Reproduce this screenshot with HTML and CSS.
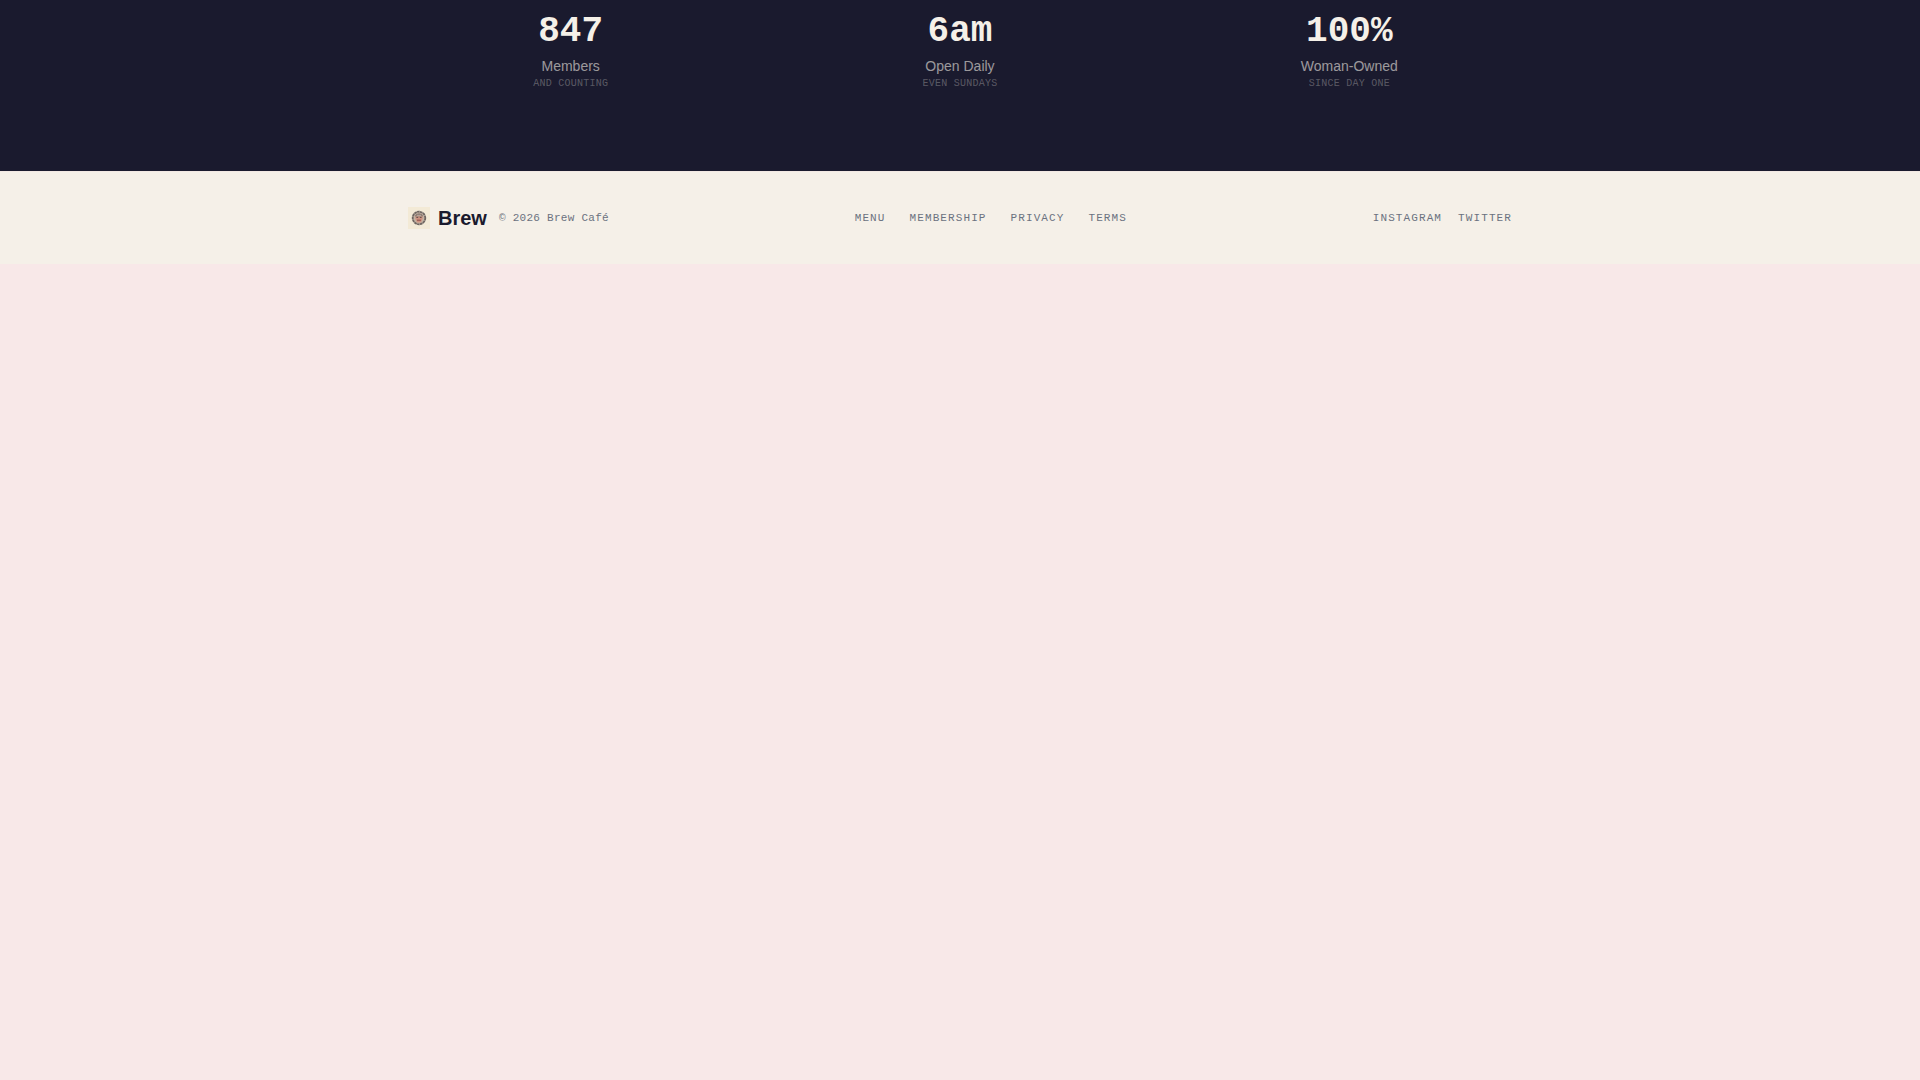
FILE: index.html
```html
<!DOCTYPE html>
<html lang="en">
<head>
    <meta charset="UTF-8">
    <meta name="viewport" content="width=device-width, initial-scale=1">
    <title>Brew Café</title>
    <link rel="stylesheet" href="styles.css">
</head>
<body>
    <section class="stats">
        <div class="container stats-grid">
            <div class="stat">
                <div class="stat-value">847</div>
                <div class="stat-label">Members</div>
                <div class="stat-note">AND COUNTING</div>
            </div>
            <div class="stat">
                <div class="stat-value">6am</div>
                <div class="stat-label">Open Daily</div>
                <div class="stat-note">EVEN SUNDAYS</div>
            </div>
            <div class="stat">
                <div class="stat-value">100%</div>
                <div class="stat-label">Woman-Owned</div>
                <div class="stat-note">SINCE DAY ONE</div>
            </div>
        </div>
    </section>

    <footer class="footer">
        <div class="container footer-row">
            <div class="brand">
                <svg class="logo" viewBox="0 0 22 22" aria-hidden="true">
                    <rect width="22" height="22" fill="#f3ead6"/>
                    <circle cx="11" cy="11" r="6.3" fill="#c4b3a3" stroke="#6e6661" stroke-width="1.8" stroke-dasharray="2.6 0.4"/>
                    <path d="M7 9.4Q7.6 6.4 11 6.4T15 9.4Z" fill="#77665f"/>
                    <path d="M7.4 9.6h7.2v2.2L13 15.4H9l-1.6-3.6z" fill="#cf9380"/>
                    <path d="M8.4 10.4h1.8M11.8 10.4h1.8" stroke="#5e4d49" stroke-width="1"/>
                    <path d="M9 13.2h4" stroke="#8c4f47" stroke-width="1"/>
                    <path d="M8.6 8.2h4.8" stroke="#e8d9ca" stroke-width=".8"/>
                </svg>
                <span class="brand-name">Brew</span>
                <span class="copyright">© 2026 Brew Café</span>
            </div>
            <nav class="footer-links">
                <a href="#menu">MENU</a>
                <a href="#membership">MEMBERSHIP</a>
                <a href="#privacy">PRIVACY</a>
                <a href="#terms">TERMS</a>
            </nav>
            <div class="social-links">
                <a href="#instagram">INSTAGRAM</a>
                <a href="#twitter">TWITTER</a>
            </div>
        </div>
    </footer>
</body>
</html>
```
FILE: styles.css
```css
* {
    box-sizing: border-box;
}
body {
    margin: 0;
    background-color: #f8e8e8;
    color: #1a1a2e;
    font-family: "Liberation Sans", Arial, sans-serif;
}
.container {
    max-width: 1152px;
    margin: 0 auto;
    padding: 0 24px;
}
.stats {
    padding: 12px 0 80px;
    background-color: #1a1a2e;
    color: #f5f0e8;
    text-align: center;
}
.stats-grid {
    display: grid;
    grid-template-columns: repeat(3, 1fr);
    gap: 64px;
}
.stat-value {
    margin-bottom: 4px;
    font-family: "Liberation Mono", monospace;
    font-size: 36px;
    font-weight: bold;
    line-height: 40px;
}
.stat-label {
    font-size: 14px;
    line-height: 20px;
    color: rgba(245, 240, 232, 0.6);
}
.stat-note {
    font-family: "Liberation Mono", monospace;
    font-size: 10px;
    line-height: 15px;
    letter-spacing: 0.025em;
    color: rgba(245, 240, 232, 0.3);
}
.footer {
    padding: 32px 0;
    border-top: 1px solid #f3e9e4;
    background-color: #f5f0e8;
}
.footer-row {
    display: flex;
    align-items: center;
    justify-content: space-between;
}
.brand {
    display: flex;
    align-items: center;
}
.logo {
    width: 22px;
    height: 22px;
    margin-right: 8px;
}
.brand-name {
    margin-right: 12px;
    font-size: 20px;
    font-weight: bold;
    line-height: 28px;
}
.copyright,
.footer-links,
.social-links {
    font-family: "Liberation Mono", monospace;
    font-size: 11px;
    line-height: 16px;
    color: #6b7280;
}
.copyright {
    letter-spacing: 0.025em;
}
.footer-links,
.social-links {
    display: flex;
    letter-spacing: 0.1em;
}
.footer-links {
    gap: 24px;
}
.social-links {
    gap: 16px;
}
.footer a {
    color: inherit;
    text-decoration: none;
}
.footer a:hover {
    color: #1a1a2e;
}
```
